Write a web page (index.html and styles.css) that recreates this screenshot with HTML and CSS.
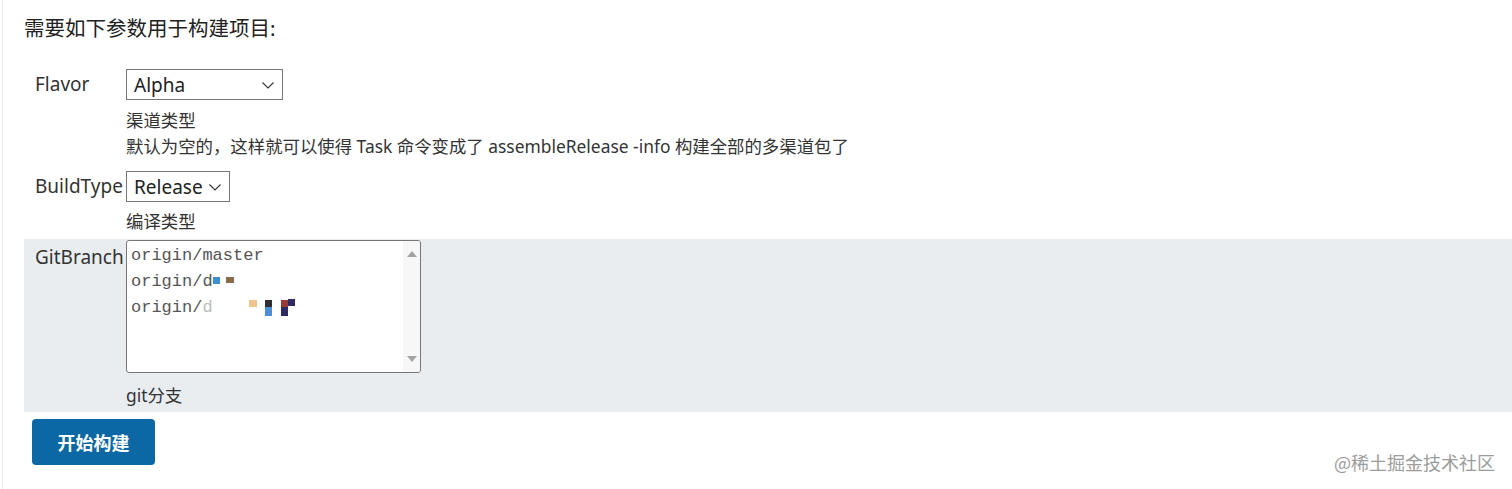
FILE: index.html
```html
<!DOCTYPE html>
<html lang="zh-CN">
<head>
  <meta charset="UTF-8">
  <title>构建参数</title>
  <link rel="stylesheet" href="styles.css">
</head>
<body>
  <div class="page">
    <h2 class="title">需要如下参数用于构建项目:</h2>

    <!-- Flavor -->
    <div class="param-row first">
      <div class="param-name">Flavor</div>
      <div class="param-value">
        <div class="select select-flavor">
          <span>Alpha</span>
          <svg class="chevron" width="12" height="7" viewBox="0 0 12 7"><path d="M0.5 0.5 L6 6 L11.5 0.5" fill="none" stroke="#333" stroke-width="1.1"/></svg>
        </div>
        <div class="param-desc">渠道类型<br>默认为空的，这样就可以使得 Task 命令变成了 assembleRelease -info 构建全部的多渠道包了</div>
      </div>
    </div>

    <!-- BuildType -->
    <div class="param-row second">
      <div class="param-name">BuildType</div>
      <div class="param-value">
        <div class="select select-type">
          <span>Release</span>
          <svg class="chevron" width="12" height="7" viewBox="0 0 12 7"><path d="M0.5 0.5 L6 6 L11.5 0.5" fill="none" stroke="#333" stroke-width="1.1"/></svg>
        </div>
        <div class="param-desc desc-type">编译类型</div>
      </div>
    </div>

    <!-- GitBranch -->
    <div class="param-row branch-row">
      <div class="param-name branch-name">GitBranch</div>
      <div class="param-value">
        <div class="listbox">
          <div class="options">
            <div class="option">origin/master</div>
            <div class="option">origin/d<svg class="blot" width="30" height="14" viewBox="0 0 30 14"><rect x="0" y="3" width="7" height="7" fill="#3b8fd4"/><rect x="13" y="3" width="8" height="6" fill="#8a6b4a"/></svg></div>
            <div class="option">origin/<span class="faded">d</span><svg class="blot" width="110" height="22" viewBox="0 0 110 22"><rect x="36" y="4" width="8" height="7" fill="#f1c48c"/><rect x="52" y="4" width="7" height="7" fill="#2e2e36"/><rect x="52" y="11" width="7" height="9" fill="#4a90d6"/><rect x="68" y="4" width="7" height="7" fill="#9b3a34"/><rect x="75" y="3" width="7" height="7" fill="#2e2a66"/><rect x="68" y="11" width="7" height="9" fill="#2e2a66"/></svg></div>
          </div>
          <div class="scrollbar">
            <svg width="10" height="6" viewBox="0 0 10 6"><path d="M0 6 L5 0 L10 6 Z" fill="#a3a3a3"/></svg>
            <svg width="10" height="6" viewBox="0 0 10 6"><path d="M0 0 L5 6 L10 0 Z" fill="#a3a3a3"/></svg>
          </div>
        </div>
        <div class="param-desc desc-branch">git分支</div>
      </div>
    </div>

    <button class="build-btn">开始构建</button>
  </div>

  <div class="watermark">@稀土掘金技术社区</div>
</body>
</html>
```

FILE: styles.css
```css
/* General Page Styles */
body {
  margin: 0;
  background: #ffffff;
  color: #333;
  font-family: "Noto Sans", "Noto Sans CJK SC", sans-serif;
}

.page {
  margin-left: 2px;
  border-left: 1px solid #ececec;
  min-height: 489px;
  padding-left: 21px;
  box-sizing: border-box;
}

.title {
  margin: 0;
  padding-top: 14px;
  font-size: 20.5px;
  font-weight: normal;
  line-height: 28px;
  color: #222;
}

/* Parameter rows */
.param-row {
  display: flex;
}

.param-row.first {
  margin-top: 27px;
}

.param-row.second {
  margin-top: 12px;
}

.param-name {
  width: 91px;
  flex-shrink: 0;
  padding-left: 11px;
  font-size: 19px;
  line-height: 31px;
  color: #333;
}

.param-value {
  flex: 1;
}

.select {
  display: flex;
  align-items: center;
  justify-content: space-between;
  box-sizing: border-box;
  height: 31px;
  border: 1px solid #767676;
  padding: 0 8px 0 7px;
  font-size: 19px;
  color: #222;
  background: #fff;
}

.select-flavor {
  width: 157px;
}

.select-type {
  width: 104px;
}

.chevron {
  margin-top: 1px;
}

.param-desc {
  margin-top: 7px;
  font-size: 17.4px;
  line-height: 26px;
  color: #333;
}

.desc-type {
  margin-top: 6px;
}

/* Branch list */
.branch-row {
  margin-top: 5px;
  background: #e9edf0;
  padding: 1px 0 4px;
}

.branch-name {
  padding-top: 2px;
}

.listbox {
  display: flex;
  box-sizing: border-box;
  width: 295px;
  height: 133px;
  border: 1px solid #767676;
  border-radius: 3px;
  background: #fff;
  overflow: hidden;
}

.options {
  flex: 1;
  padding: 1px 0 0 4px;
}

.option {
  display: flex;
  align-items: center;
  height: 26px;
  font-family: "Liberation Mono", monospace;
  font-size: 17px;
  color: #555;
  white-space: nowrap;
}

.faded {
  color: #bbb;
}

.blot {
  flex-shrink: 0;
}

.scrollbar {
  width: 17px;
  background: #f7f7f7;
  display: flex;
  flex-direction: column;
  justify-content: space-between;
  align-items: center;
  padding: 10px 0 10px;
}

.desc-branch {
  margin-top: 9px;
}

/* Build button */
.build-btn {
  display: block;
  margin: 7px 0 0 8px;
  width: 123px;
  height: 46px;
  border: none;
  border-radius: 4px;
  background: #0b68a5;
  color: #fff;
  font-family: "Noto Sans CJK SC", sans-serif;
  font-size: 18px;
  font-weight: bold;
  cursor: pointer;
}

.watermark {
  position: absolute;
  right: 17px;
  top: 450px;
  font-family: "Noto Sans CJK SC", sans-serif;
  font-size: 18px;
  line-height: 24px;
  color: #9c9c9c;
}
```
